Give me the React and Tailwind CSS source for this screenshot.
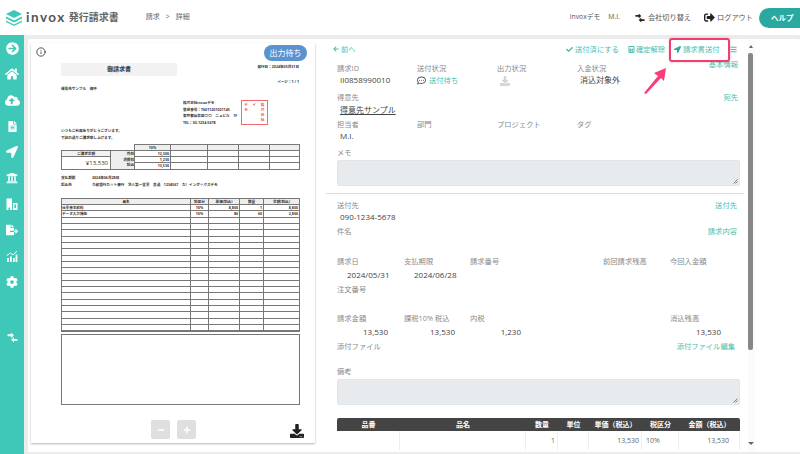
import React from "react";
import {
  FaArrowCircleRight, FaHome, FaCloudUploadAlt, FaFileAlt, FaLocationArrow, FaUniversity,
  FaFileExport, FaCog, FaSignOutAlt, FaArrowLeft, FaCheck,
  FaCalculator, FaBars, FaDownload, FaMinus, FaPlus, FaRegCommentDots,
} from "react-icons/fa";
import { Info } from "lucide-react";

const jp = "font-['Open_Sans','Noto_Sans_CJK_JP',sans-serif]";

const Buildings = ({ size }) => (
  <svg width={size} height={size} viewBox="0 0 12 12" fill="currentColor">
    <path d="M0.5 0.5 H6 V12 H4 V9.5 H2.5 V12 H0.5 Z" />
    <path d="M7 5 H11.5 V12 H7 Z" />
    <path d="M8.4 6.5 H10 V10 H8.4 Z" fill="#3fc8b8" />
  </svg>
);

const ChartUp = ({ size }) => (
  <svg width={size} height={size} viewBox="0 0 12 12" fill="currentColor">
    <path d="M1 8 H2.8 V12 H1 Z M4 6.5 H5.8 V12 H4 Z M7 8 H8.8 V12 H7 Z M9.6 4.5 H11.4 V12 H9.6 Z" />
    <path d="M0.8 5.5 L4.5 3 L7 5 L10.8 1" fill="none" stroke="currentColor" strokeWidth="1" />
  </svg>
);

const Swap = ({ size, className = "" }) => (
  <svg className={className} width={size} height={size} viewBox="0 0 12 12" fill="currentColor">
    <path d="M0.5 2.5 H4.5 V0.5 L7.5 3.5 L4.5 6.5 V4.5 H0.5 Z" />
    <path d="M11.5 7.5 H7.5 V5.5 L4.5 8.5 L7.5 11.5 V9.5 H11.5 Z" />
  </svg>
);

const sideIcons = [
  [FaArrowCircleRight, 13], [FaHome, 14], [FaCloudUploadAlt, 15], [FaFileAlt, 11], [FaLocationArrow, 12],
  [FaUniversity, 12], [Buildings, 12], [FaFileExport, 12], [ChartUp, 12], [FaCog, 12],
];

const Logo = () => (
  <svg width="18" height="17" viewBox="0 0 18 17">
    <path d="M9 1 L17 5 L9 9 L1 5 Z" fill="#3fc8b8" />
    <path d="M1 7.5 L9 11.5 L17 7.5 L17 9.5 L9 13.5 L1 9.5 Z" fill="#3fc8b8" />
    <path d="M1 11.5 L9 15.5 L17 11.5 L17 13 L9 17 L1 13 Z" fill="#3fc8b8" />
  </svg>
);

const Label = ({ children, className = "" }) => (
  <div className={`text-[7.3px] leading-[12px] text-[#8a8a8a] whitespace-nowrap ${className}`}>{children}</div>
);
const Value = ({ children, className = "" }) => (
  <div className={`text-[8px] leading-[11px] text-[#444] whitespace-nowrap ${className}`}>{children}</div>
);
const Link = ({ children, className = "" }) => (
  <div className={`text-[7.3px] leading-[12px] text-[#4cbdb0] whitespace-nowrap ${className}`}>{children}</div>
);

const Note = () => (
  <div className="h-[26px] mx-[11px] w-[403px] bg-[#e8ebee] rounded-[2px] border border-[#e2e5e8] relative">
    <svg className="absolute right-[1px] bottom-[1px]" width="5" height="5" viewBox="0 0 5 5">
      <path d="M0.5 4.5 L4.5 0.5 M2.5 4.5 L4.5 2.5" stroke="#555" strokeWidth="0.7" />
    </svg>
  </div>
);

const Cols = ({ items, className = "" }) => (
  <div className={`grid grid-cols-[67px_66px_133px_67px_67px] ${className}`}>
    {items.map((t, i) => <div key={i}>{t}</div>)}
  </div>
);

// invoice preview, tiny text stands in for the printed pdf
const tiny = "text-[3.6px] leading-[6px] text-[#333] font-bold whitespace-nowrap";
const rowCols = "grid grid-cols-[129px_18px_31px_24px_35px]";

const ItemRow = ({ c = [] }) => (
  <div className={`${rowCols} h-[6.32px] border-b border-[#777] ${tiny}`}>
    {[0, 1, 2, 3, 4].map((i) => (
      <div key={i} className={`border-r border-[#777] last:border-r-0 overflow-hidden leading-[5.5px] ${i === 0 ? "" : i === 1 ? "text-center" : "text-right pr-[1px]"}`}>{c[i] || ""}</div>
    ))}
  </div>
);

const Doc = () => (
  <div className="ml-[30px] w-[239px]">
    <div className="flex justify-between items-start h-[15px]">
      <div className="w-[116px] h-[13px] bg-[#f2f2f2] text-center text-[6px] leading-[13px] font-bold text-[#333]">御請求書</div>
      <div className={`${tiny} mt-[1px] mr-[1px]`}>発行日：2024年05月31日</div>
    </div>
    <div className={`${tiny} text-right mt-[1px] mr-[1px]`}>ページ：1 / 1</div>
    <div className={`${tiny} mt-[1px]`}>得意先サンプル　御中</div>
    <div className="flex mt-[8px] ml-[122px] h-[26px] items-end relative">
      <div className={`${tiny} !leading-[6.4px]`}>
        <div>株式会社invoxデモ</div>
        <div>登録番号：T6011201021145</div>
        <div>東京都仙台区〇〇　ニュビル　1F</div>
        <div>TEL：03-1234-5678</div>
      </div>
      <div className="absolute left-[58px] top-0 w-[27px] h-[25px] border border-[#f26a6a] flex justify-around text-[3.6px] leading-[5px] text-[#ee5555] pt-[1px] font-bold">
        <div className="w-[4px]">デモ</div>
        <div className="w-[4px]">イ</div>
        <div className="w-[4px]">株式会社</div>
      </div>
    </div>
    <div className={`${tiny} !leading-[6.5px] mt-[2px]`}>
      <div>いつもご利用ありがとうございます。</div>
      <div>下記の通りご請求申し上げます。</div>
    </div>
    <div className="flex mt-[3px] items-end">
      <div className="w-[73px] border-[1.5px] border-r-0 border-[#777] flex h-[20px]">
        <div className="w-[49px] border-r border-[#777]">
          <div className={`${tiny} text-center h-[5.5px] !leading-[5px] border-b border-[#777] bg-[#f2f2f2]`}>ご請求金額</div>
          <div className="text-[6px] leading-[13px] text-right pr-[2px] text-[#333]">¥13,530</div>
        </div>
        <div className={`flex-1 bg-[#eee] ${tiny} text-right !leading-[5.6px]`}>
          <div>外税</div><div>消費税</div><div>税込</div>
        </div>
      </div>
      <div className="w-[166px] border-[1.5px] border-[#777] grid grid-cols-[36px_37px_31px_31px_1fr]">
        {[["10%", "", "", "", ""], ["12,300", "", "", "", ""], ["1,230", "", "", "", ""], ["13,530", "", "", "", ""]].map((r, i) =>
          r.map((t, j) => (
            <div key={`${i}-${j}`} className={`${tiny} h-[6px] !leading-[5px] ${i === 0 ? "text-center bg-[#eee]" : "text-right pr-[1px]"} border-[#777] ${j < 4 ? "border-r" : ""} ${i < 3 ? "border-b" : ""}`}>{t}</div>
          ))
        )}
      </div>
    </div>
    <div className={`${tiny} mt-[4px] !leading-[7px]`}>
      <div className="flex"><span className="w-[31px]">支払期限</span><span>2024年06月28日</span></div>
      <div className="flex"><span className="w-[31px]">振込先</span><span>令和銀行カット慶行　法人第一営業　普通　1234567　カ）インボックスデモ</span></div>
    </div>
    <div className="mt-[10px] border-[1.5px] border-[#777]">
      <div className={`${rowCols} h-[6px] border-b border-[#777] bg-[#eee] ${tiny}`}>
        {["品名", "税区分", "単価(税込)", "数量", "金額(税込)"].map((t) => (
          <div key={t} className="text-center border-r border-[#777] last:border-r-0 leading-[5px]">{t}</div>
        ))}
      </div>
      <ItemRow c={["仕業基本給料", "10%", "8,800", "1", "8,800"]} />
      <ItemRow c={["データ入力補佐", "10%", "80", "60", "2,800"]} />
      {Array.from({ length: 18 }).map((_, i) => <ItemRow key={i} />)}
    </div>
    <div className="mt-[2px] h-[71px] border-[1.5px] border-[#777]" />
  </div>
);

export default function App() {
  return (
    <div className={`w-[800px] h-[454px] overflow-hidden bg-white relative ${jp}`}>
      <header className="h-[35px] flex items-center bg-white">
        <div className="ml-[5px]"><Logo /></div>
        <div className="ml-[3px] text-[13.5px] font-['Lato',sans-serif] font-bold tracking-[1.5px] text-[#555]">invox</div>
        <div className="ml-[3px] text-[10px] font-bold text-[#666] whitespace-nowrap">発行請求書</div>
        <div className="ml-[27px] flex gap-[6px] text-[7px] text-[#666]">
          <span>請求</span><span>&gt;</span><span>詳細</span>
        </div>
        <div className="ml-auto flex items-center text-[7.2px] text-[#555] whitespace-nowrap">
          <span className="text-[6.8px]">invoxデモ</span>
          <span className="ml-[8px] text-[6.8px]">M.I.</span>
          <Swap size={10} className="ml-[15px] text-[#222]" />
          <span className="ml-[3px]">会社切り替え</span>
          <FaSignOutAlt className="ml-[13px] text-[#222]" size={11} />
          <span className="ml-[2px]">ログアウト</span>
          <div className="ml-[6px] w-[41px] h-[20px] rounded-l-full bg-[#2aa9a0] text-white text-[7.5px] font-bold leading-[20px] pl-[12px]">ヘルプ</div>
        </div>
      </header>
      <div className="h-[419px] flex bg-[#ececec] pt-[4px] pb-[2px]">
        <aside className="w-[24px] shrink-0 bg-[#3fc8b8] -mt-[4px] -mb-[2px] flex flex-col items-center text-white">
          {sideIcons.map(([Icon, s], i) => (
            <div key={i} className="h-[26px] w-full flex items-center justify-center"><Icon size={s} /></div>
          ))}
          <div className="mt-[29px] h-[26px] flex items-center"><Swap size={11} /></div>
        </aside>
        <main className="flex-1 flex bg-white ml-[4px] rounded-t-[2px]">
          <section className="w-[284px] h-[400px] relative bg-white shadow-[0_1px_2px_rgba(0,0,0,0.3)] ml-[3px] mt-[4px] shrink-0">
            <div className="h-[16px] relative">
              <Info size={10} className="absolute left-[5px] top-[4px] text-[#333]" strokeWidth={2} />
              <div className="absolute left-[233px] top-[2px] w-[43px] h-[16px] rounded-full bg-[#5b93d0] text-white text-[8px] leading-[16px] text-center">出力待ち</div>
            </div>
            <div className="pt-[4px]"><Doc /></div>
            <div className="absolute left-[120px] top-[377px] flex gap-[7px]">
              <div className="w-[19px] h-[19px] bg-[#dfdfdf] rounded-[2px] flex items-center justify-center text-white"><FaMinus size={8} /></div>
              <div className="w-[19px] h-[19px] bg-[#dfdfdf] rounded-[2px] flex items-center justify-center text-white"><FaPlus size={8} /></div>
            </div>
            <FaDownload size={14} className="absolute left-[259px] top-[381px] text-[#222]" />
          </section>

          <section className="ml-[11px] w-[430px] relative overflow-hidden">
            <div className="h-[19px] pt-[1px] flex items-center text-[7.3px] text-[#4cbdb0] whitespace-nowrap">
              <FaArrowLeft size={6} className="ml-[7px]" />
              <span className="ml-[2px] w-[14px]">前へ</span>
              <FaCheck size={7} className="ml-[211px]" />
              <span className="ml-[2px] w-[44px]">送付済にする</span>
              <FaCalculator size={7} className="ml-[9px]" />
              <span className="ml-[1px] w-[29px]">確定解除</span>
              <FaLocationArrow size={7} className="ml-[9px] text-[#2aa9a0]" />
              <span className="ml-[2px] w-[36px]">請求書送付</span>
              <FaBars size={7} className="ml-[11px]" />
            </div>
            <div className="pl-[11px] pr-[18px] pt-[4px]">
              <div className="grid grid-cols-[80px_80px_80px_1fr] h-[29px]">
                <div><Label>請求ID</Label><Value className="pl-[3px]">II0858990010</Value></div>
                <div>
                  <Label>送付状況</Label>
                  <Link className="flex items-center gap-[3px]"><FaRegCommentDots size={9} className="text-[#555]" />送付待ち</Link>
                </div>
                <div><Label>出力状況</Label><FaDownload size={10} className="text-[#d5d5d5] mt-[2px] ml-[3px]" /></div>
                <div className="relative">
                  <Label>入金状況</Label><Value className="pl-[3px]">消込対象外</Value>
                  <Link className="absolute right-0 -top-[4px]">基本情報</Link>
                </div>
              </div>
              <div className="h-[27px] relative">
                <Label>得意先</Label>
                <Value className="pl-[3px] underline mt-[1px]">得意先サンプル</Value>
                <Link className="absolute right-0 top-0">宛先</Link>
              </div>
              <div className="grid grid-cols-[80px_80px_80px_1fr] h-[27px]">
                <div><Label>担当者</Label><Value className="pl-[3px]">M.I.</Value></div>
                <Label>部門</Label><Label>プロジェクト</Label><Label>タグ</Label>
              </div>
              <div className="pt-[1px]"><Label>メモ</Label></div>
            </div>
            <div className="mt-[2px]"><Note /></div>
            <div className="mt-[7px] border-t border-[#ddd] w-[418px]" />
            <div className="pl-[11px] pr-[19px] pt-[5px]">
              <div className="flex justify-between"><Label>送付先</Label><Link>送付先</Link></div>
              <Value className="pl-[3px] !leading-[12px]">090-1234-5678</Value>
              <div className="flex justify-between pt-[2px] h-[26px]"><Label>件名</Label><Link>請求内容</Link></div>
              <Cols className="pt-[6px]" items={[<Label>請求日</Label>, <Label>支払期限</Label>, <Label>請求番号</Label>, <Label>前回請求残高</Label>, <Label>今回入金額</Label>]} />
              <Cols className="pt-[2px] h-[16px]" items={[<Value className="pl-[10px]">2024/05/31</Value>, <Value className="pl-[10px]">2024/06/28</Value>, "", "", ""]} />
              <Label className="h-[24px]">注文番号</Label>
              <Cols className="pt-[5px]" items={[<Label>請求金額</Label>, <Label>課税10% 税込</Label>, <Label>内税</Label>, "", <Label>消込残高</Label>]} />
              <Cols className="pt-[2px] h-[14px]" items={[<Value className="w-[51px] text-right">13,530</Value>, <Value className="w-[51px] text-right">13,530</Value>, <Value className="w-[51px] text-right">1,230</Value>, "", <Value className="w-[51px] text-right">13,530</Value>]} />
              <div className="flex justify-between h-[19px] pt-[2px]"><Label>添付ファイル</Label><Link className="pr-[2px]">添付ファイル編集</Link></div>
              <Label className="pt-[8px] h-[20px]">備考</Label>
            </div>
            <div className="mt-[2px]"><Note /></div>
            <div className="mx-[11px] mt-[13px] w-[403px]">
              <div className="h-[13px] rounded-t-[2px] bg-[#444] text-white text-[7px] leading-[13px] font-bold grid grid-cols-[63px_126px_32px_31px_53px_37px_61px] text-center whitespace-nowrap">
                {["品番", "品名", "数量", "単位", "単価（税込）", "税区分", "金額（税込）"].map((t) => <div key={t}>{t}</div>)}
              </div>
              <div className="h-[19px] grid grid-cols-[63px_126px_32px_31px_53px_37px_61px] text-[7px] leading-[19px] text-[#666]">
                {["", "", "1", "", "13,530", "10%", "13,530"].map((t, i) => (
                  <div key={i} className={`border-r border-[#eee] ${i === 5 ? "text-left pl-[4px]" : i === 6 ? "text-right pr-[10px]" : "text-right pr-[2px]"}`}>{t}</div>
                ))}
              </div>
            </div>
            <div className="absolute right-[1px] top-0 bottom-0 w-[7px] bg-[#fbfbfb]">
              <div className="absolute left-[0.5px] top-[6px] w-0 h-0 border-x-[2.5px] border-x-transparent border-b-[3px] border-b-[#666]" />
              <div className="absolute left-0 top-[14px] w-[5px] h-[297px] bg-[#888] rounded-[2px]" />
            </div>
          </section>
        </main>
      </div>

      {/* annotation over the screenshot */}
      <div className="absolute left-[748px] top-[442px] w-0 h-0 border-x-[3px] border-x-transparent border-t-[3px] border-t-[#666]" />
      <div className="absolute left-[669px] top-[38px] w-[61px] h-[24px] border-[2px] border-[#ee3f6e] rounded-[3px] shadow-[0_0_2px_rgba(238,63,110,0.5)]" />
      <svg className="absolute left-[640px] top-[64px]" width="30" height="32" viewBox="0 0 30 32">
        <path d="M4 29 L18 12 L14 9 L26 4 L24 17 L21 14 L6 30 Z" fill="#f83e78" />
      </svg>
    </div>
  );
}
